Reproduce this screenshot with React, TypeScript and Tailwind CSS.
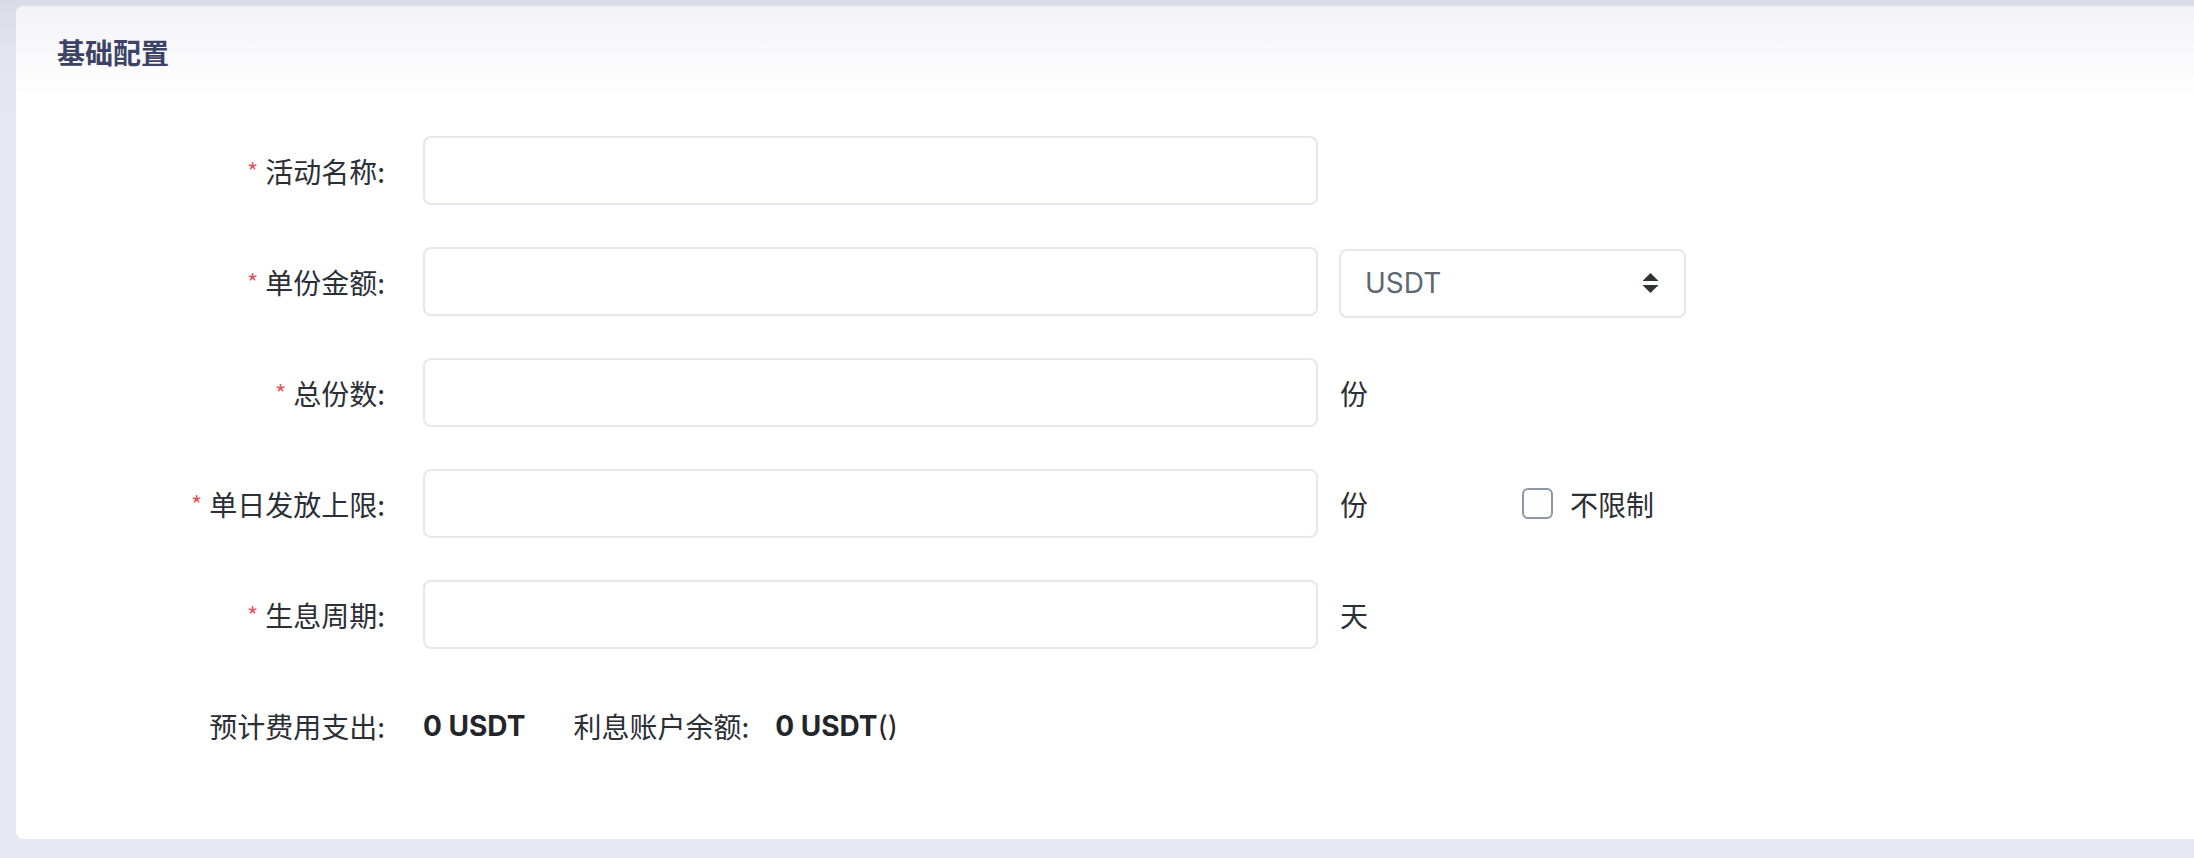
const cjk = { fontFamily: '"Noto Sans CJK SC", "Noto Sans", sans-serif' }
const latin = { fontFamily: 'Inter, "Noto Sans CJK SC", sans-serif' }

function Label({ text, required = true }: { text: string; required?: boolean }) {
  return (
    <div className="w-[407px] shrink-0 pr-[38px] flex justify-end items-center text-[28px] text-[#2b2f36]">
      {required && <span className="text-[#e2545e] mr-[7px] text-[24px]">*</span>}
      <span>{text}:</span>
    </div>
  )
}

function TextInput() {
  return (
    <input
      type="text"
      className="w-[895px] h-[69px] shrink-0 rounded-[8px] border-2 border-[#e6e6eb] bg-white px-6 text-[27px] outline-none"
    />
  )
}

function Unit({ text }: { text: string }) {
  return <span className="ml-[22px] text-[28px] text-[#2b2f36]">{text}</span>
}

export default function App() {
  return (
    <div
      className="h-[858px] w-full overflow-hidden bg-[linear-gradient(180deg,#d9dbe7_0px,#e3e6f0_60px,#e6e9f2_200px)] pt-[6px]"
      style={cjk}
    >
      <div className="ml-4 -mr-4 h-[833px] rounded-[8px] bg-white overflow-hidden">
        {/* header */}
        <div className="h-[92px] px-[41px] pt-[28px] bg-gradient-to-b from-[#f3f2f6] to-white">
          <h2 className="text-[28px] leading-[36px] font-semibold text-[#3d4367]">基础配置</h2>
        </div>

        {/* form */}
        <div className="pt-[38px] flex flex-col gap-[42px]">
          <div className="flex items-center h-[69px]">
            <Label text="活动名称" />
            <TextInput />
          </div>

          <div className="flex items-center h-[69px]">
            <Label text="单份金额" />
            <TextInput />
            <div className="ml-[21px] mt-[3px] w-[347px] h-[69px] rounded-[8px] border-2 border-[#e6e6eb] flex items-center justify-between pl-[24px] pr-[25px]">
              <span className="text-[28px] text-[#5d6873]" style={latin}>USDT</span>
              <svg width="17" height="20" viewBox="0 0 17 20">
                <path d="M8.5 0 L16.5 8 L0.5 8 Z" fill="#2d3338" />
                <path d="M0.5 12 L16.5 12 L8.5 20 Z" fill="#2d3338" />
              </svg>
            </div>
          </div>

          <div className="flex items-center h-[69px]">
            <Label text="总份数" />
            <TextInput />
            <Unit text="份" />
          </div>

          <div className="flex items-center h-[69px]">
            <Label text="单日发放上限" />
            <TextInput />
            <Unit text="份" />
            <label className="ml-[154px] flex items-center gap-[17px] text-[28px] text-[#2b2f36]">
              <span className="w-[31px] h-[31px] rounded-[6px] border-2 border-[#8b97a4] bg-white" />
              不限制
            </label>
          </div>

          <div className="flex items-center h-[69px]">
            <Label text="生息周期" />
            <TextInput />
            <Unit text="天" />
          </div>

          <div className="flex items-center h-[69px]">
            <Label text="预计费用支出" required={false} />
            <span className="text-[28px] font-bold text-[#22262b]" style={latin}>0 USDT</span>
            <span className="ml-[48px] text-[28px] text-[#2b2f36]">利息账户余额:</span>
            <span className="ml-[26px] text-[28px] font-bold text-[#22262b]" style={latin}>
              0 USDT<span className="font-normal">()</span>
            </span>
          </div>
        </div>
      </div>
    </div>
  )
}
